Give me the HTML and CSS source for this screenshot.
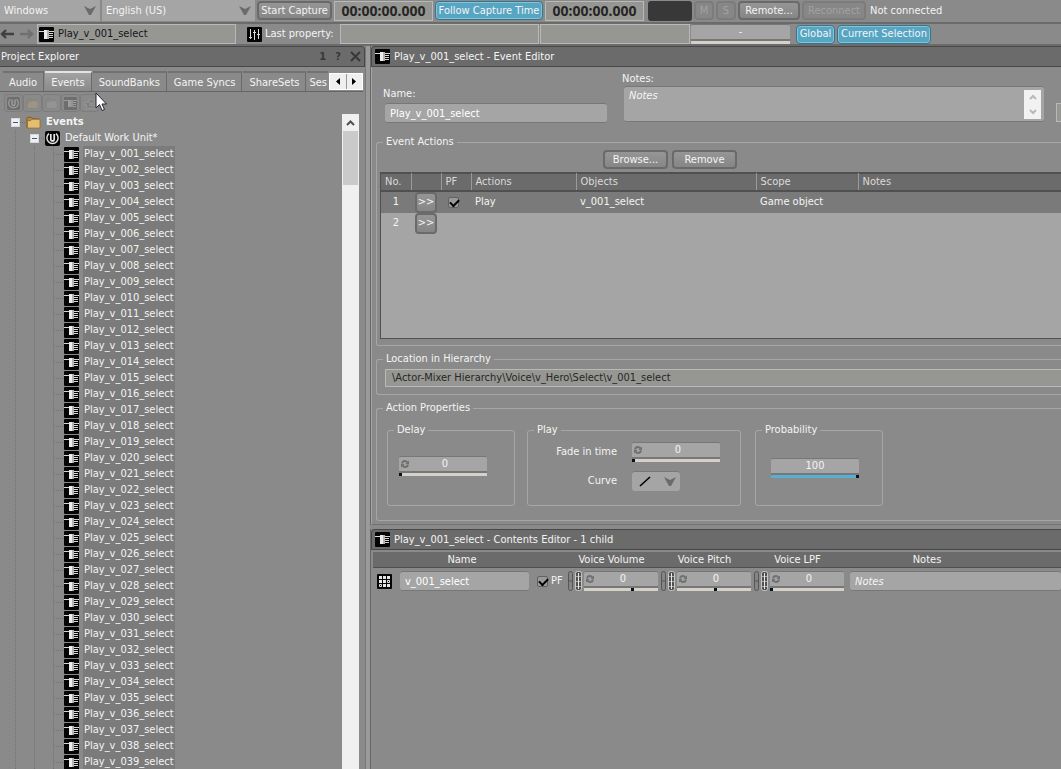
FILE: index.html
```html
<!DOCTYPE html>
<html lang="en">
<head>
    <meta charset="UTF-8">
    <meta name="viewport" content="width=device-width, initial-scale=1.0">
    <title>Event Editor</title>
    <link rel="stylesheet" href="styles.css">
</head>
<body>
    <!-- Shared icons -->
    <svg class="defs" width="0" height="0" aria-hidden="true">
        <symbol id="i-event" viewBox="0 0 15 15">
            <rect width="15" height="15" rx="1" fill="#050505"/>
            <g shape-rendering="crispEdges">
                <path d="M0 4h5v1H0zM10 4h5v1h-5zM10 6h4v1h-4zM10 8h4v1h-4zM10 10h4v1h-4z" fill="#d8d8d8"/>
                <rect x="5" y="3" width="3" height="9" fill="#ececec"/>
                <rect x="8" y="3" width="2" height="9" fill="#b4b4b4"/>
            </g>
        </symbol>
        <symbol id="i-unit" viewBox="0 0 15 15">
            <rect width="15" height="15" rx="2" fill="#050505"/>
            <path d="M4 2.600a5.600 5.600 0 1 0 7 0" fill="none" stroke="#e8e8e8" stroke-width="1.400"/>
            <path d="M5.800 3v5.200a1.700 1.700 0 0 0 3.400 0V3" fill="none" stroke="#e8e8e8" stroke-width="1.700"/>
        </symbol>
        <symbol id="i-folder" viewBox="0 0 16 14">
            <path d="M1 12.500V2.500q0-1 1-1h4l1 1.500h6.500v9.500z" fill="#b98a3e" stroke="#7d5c25"/>
            <path d="M1.500 13V5H5l1-1.500h9V13z" fill="#e3bd74" stroke="#94702f"/>
        </symbol>
        <symbol id="i-down" viewBox="0 0 12 9">
            <path d="M0 0l6 3 6-3-5 9H5z" fill="#6b6b6b"/>
        </symbol>
        <symbol id="i-spin" viewBox="0 0 8 8">
            <path d="M1 3.500Q1.500 1 4 1q1.500 0 2.500 1.500M7 4.500Q6.500 7 4 7 2.500 7 1.500 5.500" fill="none" stroke="#707070" stroke-width="1.800"/>
            <path d="M8 .5v3.500H4.500zM0 7.500V4h3.500z" fill="#707070"/>
        </symbol>
        <symbol id="i-link" viewBox="0 0 5 20">
            <rect x=".5" y=".5" width="4" height="19" rx="2" fill="#858585" stroke="#555"/>
            <path d="M1 10h3" stroke="#555"/>
        </symbol>
        <symbol id="i-rtpc" viewBox="0 0 7 20">
            <rect x=".5" y=".5" width="6" height="19" rx="2" fill="#505050" stroke="#c8c8c8"/>
            <path d="M1 5.500h5M1 10.500h5M1 15.500h5" stroke="#aaa"/>
            <path d="M3.500 2v16" stroke="#e8e8e8"/>
        </symbol>
    </svg>

    <header class="bars">
        <div class="bar bar-top">
            <div class="pick pick-platform">
                <select aria-label="Platform"><option>Windows</option></select>
                <svg class="down"><use href="#i-down"/></svg>
            </div>
            <div class="pick pick-language">
                <select aria-label="Language"><option>English (US)</option></select>
                <svg class="down"><use href="#i-down"/></svg>
            </div>
            <button class="btn w-start">Start Capture</button>
            <output class="clock">00:00:00.000</output>
            <button class="btn btn-on w-follow">Follow Capture Time</button>
            <output class="clock">00:00:00.000</output>
            <span class="meter"></span>
            <button class="btn btn-small" disabled>M</button>
            <button class="btn btn-small" disabled>S</button>
            <button class="btn w-remote">Remote...</button>
            <button class="btn w-reconnect" disabled>Reconnect</button>
            <span class="status">Not connected</span>
        </div>
        <div class="bar bar-nav">
            <button class="nav" aria-label="Back"><svg width="14" height="12" viewBox="0 0 14 12"><path d="M14 6H2M6 2L2 6l4 4" fill="none" stroke="#404040" stroke-width="2.400"/></svg></button>
            <button class="nav nav-off" aria-label="Forward"><svg width="14" height="12" viewBox="0 0 14 12"><path d="M0 6h12M8 2l4 4-4 4" fill="none" stroke="#6f6f6f" stroke-width="2.400"/></svg></button>
            <div class="current"><svg class="icon"><use href="#i-event"/></svg><span>Play_v_001_select</span></div>
            <svg class="icon" viewBox="0 0 15 15"><rect width="15" height="15" rx="1" fill="#050505"/><path d="M3.500 2v10M7.500 3v10M11.500 2v10M2 10.500h3M6 5.500h3M10 7.500h3" stroke="#ddd"/></svg>
            <span class="last">Last property:</span>
            <div class="box box-last"></div>
            <div class="box box-value"></div>
            <div class="knob knob-wide"><span class="knob-value">-</span><span class="track"></span></div>
            <button class="btn btn-on w-global">Global</button>
            <button class="btn btn-on w-selection">Current Selection</button>
        </div>
    </header>

    <div class="main">
        <section class="explorer">
            <div class="title">
                <h2>Project Explorer</h2>
                <span class="title-tools"><b>1</b><b>?</b><svg width="11" height="11" viewBox="0 0 11 11"><path d="M1 1l9 9M10 1l-9 9" stroke="#383838" stroke-width="2"/></svg></span>
            </div>
            <nav class="tabs">
                <button class="tab">Audio</button>
                <button class="tab tab-on">Events</button>
                <button class="tab">SoundBanks</button>
                <button class="tab">Game Syncs</button>
                <button class="tab">ShareSets</button>
                <button class="tab tab-cut">Ses</button>
                <div class="tab-scroll">
                    <button aria-label="Previous tabs"><svg width="4" height="7" viewBox="0 0 4 7"><path d="M4 0v7L0 3.500z"/></svg></button>
                    <button aria-label="Next tabs"><svg width="4" height="7" viewBox="0 0 4 7"><path d="M0 0v7l4-3.500z"/></svg></button>
                </div>
            </nav>
            <div class="tools">
                <button disabled aria-label="New work unit"><svg class="icon"><use href="#i-unit"/></svg></button>
                <button disabled aria-label="New folder"><svg class="icon"><use href="#i-folder"/></svg></button>
                <button disabled aria-label="New virtual folder"><svg class="icon pale"><use href="#i-folder"/></svg></button>
                <button disabled aria-label="New event"><svg class="icon"><use href="#i-event"/></svg></button>
                <button disabled aria-label="New dialogue event"><svg class="icon" viewBox="0 0 15 15"><path d="M2 9V6h5V3h6v4H8v3h6v3H4V9z" fill="#555" stroke="#ccc"/></svg></button>
                <svg class="cursor" width="12" height="20" viewBox="0 0 12 20"><path d="M1 1v15l3.500-3.500L7 18.500l2.500-1L7 12h4.500z" fill="#fff" stroke="#223"/></svg>
            </div>
            <div class="browse">
                <ul class="tree" id="tree">
                    <li class="lvl-1"><span class="fold"></span><i class="dots"></i><svg class="icon"><use href="#i-folder"/></svg><strong>Events</strong></li>
                    <li class="lvl-2"><span class="fold"></span><i class="dots"></i><svg class="icon"><use href="#i-unit"/></svg><span>Default Work Unit*</span></li>
                </ul>
                <div class="scroll">
                    <span class="scroll-up"><svg width="9" height="6" viewBox="0 0 9 6"><path d="M1 5l3.500-3.500L8 5" fill="none" stroke="#505050" stroke-width="2"/></svg></span>
                    <span class="scroll-thumb"></span>
                </div>
            </div>
        </section>

        <div class="editors">
            <section class="editor">
                <div class="title"><svg class="icon"><use href="#i-event"/></svg><h2>Play_v_001_select - Event Editor</h2></div>
                <div class="editor-body">
                    <div class="head">
                        <div class="name-field">
                            <label for="name">Name:</label>
                            <input class="text" id="name" type="text" value="Play_v_001_select">
                        </div>
                        <div class="notes-field">
                            <label for="notes">Notes:</label>
                            <div class="notes-box">
                                <textarea class="text" id="notes" placeholder="Notes"></textarea>
                                <span class="notes-scroll">
                                    <svg width="8" height="6" viewBox="0 0 8 6"><path d="M1 5l3-3 3 3" fill="none" stroke="#b8b8b8" stroke-width="2"/></svg>
                                    <svg width="8" height="6" viewBox="0 0 8 6"><path d="M1 1l3 3 3-3" fill="none" stroke="#b8b8b8" stroke-width="2"/></svg>
                                </span>
                            </div>
                        </div>
                        <div class="edge"></div>
                    </div>

                    <fieldset class="group group-actions">
                        <legend>Event Actions</legend>
                        <div class="commands">
                            <button class="btn">Browse...</button>
                            <button class="btn">Remove</button>
                        </div>
                        <div class="grid">
                            <table>
                                <thead>
                                    <tr><th class="c-no">No.</th><th class="c-go"></th><th class="c-pf">PF</th><th class="c-act">Actions</th><th class="c-obj">Objects</th><th class="c-scope">Scope</th><th>Notes</th></tr>
                                </thead>
                                <tbody>
                                    <tr class="picked"><td class="c-no">1</td><td><button class="btn go">&gt;&gt;</button></td><td class="c-check"><input type="checkbox" aria-label="PF" checked></td><td>Play</td><td>v_001_select</td><td>Game object</td><td></td></tr>
                                    <tr><td class="c-no">2</td><td><button class="btn go">&gt;&gt;</button></td><td></td><td></td><td></td><td></td><td></td></tr>
                                </tbody>
                            </table>
                        </div>
                    </fieldset>

                    <fieldset class="group group-location">
                        <legend>Location in Hierarchy</legend>
                        <div class="box path">\Actor-Mixer Hierarchy\Voice\v_Hero\Select\v_001_select</div>
                    </fieldset>

                    <fieldset class="group group-props">
                        <legend>Action Properties</legend>
                        <div class="props">
                            <fieldset class="group prop prop-delay">
                                <legend>Delay</legend>
                                <div class="knob"><svg class="spin"><use href="#i-spin"/></svg><input class="knob-value" aria-label="Delay" value="0"><span class="track"><i></i></span></div>
                            </fieldset>
                            <fieldset class="group prop prop-play">
                                <legend>Play</legend>
                                <div class="pair">
                                    <label for="fade">Fade in time</label>
                                    <div class="knob"><svg class="spin"><use href="#i-spin"/></svg><input class="knob-value" id="fade" value="0"><span class="track"><i></i></span></div>
                                    <label for="curve">Curve</label>
                                    <div class="pick pick-curve">
                                        <select id="curve"><option label=" "></option></select>
                                        <svg class="line" width="12" height="11" viewBox="0 0 12 11"><path d="M1 10L11 1" stroke="#000" stroke-width="1.600"/></svg>
                                        <svg class="down"><use href="#i-down"/></svg>
                                    </div>
                                </div>
                            </fieldset>
                            <fieldset class="group prop prop-chance">
                                <legend>Probability</legend>
                                <div class="knob knob-full"><input class="knob-value" aria-label="Probability" value="100"><span class="track"><i></i></span></div>
                            </fieldset>
                        </div>
                    </fieldset>
                </div>
            </section>

            <section class="editor contents">
                <div class="title"><svg class="icon"><use href="#i-event"/></svg><h2>Play_v_001_select - Contents Editor - 1 child</h2></div>
                <div class="cols cols-head">
                    <span class="h-name">Name</span><span>Voice Volume</span><span>Voice Pitch</span><span>Voice LPF</span><span class="h-notes">Notes</span>
                </div>
                <div class="cols cols-row">
                    <div class="child">
                        <svg class="icon" viewBox="0 0 15 15"><rect width="15" height="15" rx="1" fill="#050505"/><path d="M2 2h3v3H2zM6 2h3v3H6zM10 2h3v3h-3zM2 6h3v3H2zM6 6h3v3H6zM10 10h3v3h-3zM6 10h3v3H6z" fill="#e8e8e8"/><path d="M10.500 6.500h2v2h-2zM2.500 10.500h2v2h-2z" fill="none" stroke="#e8e8e8"/></svg>
                        <input class="text" type="text" aria-label="Name" value="v_001_select">
                    </div>
                    <label class="pf"><input type="checkbox" checked>PF</label>
                    <div class="voice"><svg class="lnk"><use href="#i-link"/></svg><svg class="rtpc"><use href="#i-rtpc"/></svg><div class="knob knob-mid"><svg class="spin"><use href="#i-spin"/></svg><input class="knob-value" aria-label="Voice Volume" value="0"><span class="track"><i style="margin-left: 64%"></i></span></div></div>
                    <div class="voice"><svg class="lnk"><use href="#i-link"/></svg><svg class="rtpc"><use href="#i-rtpc"/></svg><div class="knob knob-mid"><svg class="spin"><use href="#i-spin"/></svg><input class="knob-value" aria-label="Voice Pitch" value="0"><span class="track"><i style="margin-left: 50%"></i></span></div></div>
                    <div class="voice"><svg class="lnk"><use href="#i-link"/></svg><svg class="rtpc"><use href="#i-rtpc"/></svg><div class="knob knob-mid"><svg class="spin"><use href="#i-spin"/></svg><input class="knob-value" aria-label="Voice LPF" value="0"><span class="track"><i></i></span></div></div>
                    <input class="text row-notes" type="text" aria-label="Notes" placeholder="Notes">
                </div>
            </section>
        </div>
    </div>

    <script>
        const tree = document.getElementById('tree');

        for (let i = 1; i <= 39; i++) {
            const li = document.createElement('li');
            li.className = 'lvl-3';
            li.innerHTML = '<i class="dots"></i><svg class="icon"><use href="#i-event"/></svg>' +
                '<span class="sel">Play_v_' + String(i).padStart(3, '0') + '_select</span>';
            tree.appendChild(li);
        }
    </script>
</body>
</html>
```
FILE: styles.css
```css
:root {
    --bg: #8a8a8a;
    --title: #6b6b6b;
    --field: #a5a5a5;
    --box: #969693;
    --box-line: #b9b9b9;
    --line: #a6a6a6;
    --dark: #6a6a6a;
    --text: #f4f4f4;
    --blue: #56a5c3;
}

* {
    margin: 0;
    padding: 0;
    box-sizing: border-box;
}

body {
    display: flex;
    flex-direction: column;
    height: 100vh;
    overflow: hidden;
    background: var(--bg);
    color: var(--text);
    font-family: "DejaVu Sans Condensed", "Noto Sans", sans-serif;
    font-size: 11px;
    line-height: 14px;
}

button, input, select, textarea {
    font: inherit;
    color: inherit;
    border: none;
    background: none;
}

h2 {
    font-size: 11px;
    font-weight: normal;
}

svg {
    flex: none;
}

.defs {
    position: absolute;
}

.icon {
    width: 15px;
    height: 15px;
}

/* Toolbars */
.bar {
    display: flex;
    align-items: center;
    white-space: nowrap;
    border-bottom: 2px solid var(--title);
}

.bar-top {
    height: 24px;
    gap: 2px;
    padding-bottom: 1px;
}

.bar-nav {
    height: 22px;
}

.btn {
    flex: none;
    height: 19px;
    border: 2px solid var(--dark);
    border-radius: 4px;
    background: linear-gradient(#969696, #868686);
}

.btn:disabled {
    color: #a2a2a2;
    border-color: #7c7c7c;
    background: #878787;
}

.btn-on {
    border: 1px solid #37758d;
    background: var(--blue);
    box-shadow: inset 0 0 0 1px #86c2d8;
}

.btn-small { width: 20px; }
.w-start { width: 75px; }
.w-follow { width: 108px; }
.w-remote { width: 62px; }
.w-reconnect { width: 64px; }
.w-global { width: 39px; margin: 0 2px 0 6px; }
.w-selection { width: 94px; }

.pick {
    display: grid;
    flex: none;
    align-items: center;
    background: var(--field);
}

.pick > * {
    grid-area: 1 / 1;
}

.pick select {
    appearance: none;
    width: 100%;
    height: 100%;
    padding-left: 4px;
}

.pick .down {
    justify-self: end;
    margin-right: 4px;
    pointer-events: none;
}

.pick .line {
    margin-left: 7px;
}

.pick-platform { width: 100px; height: 21px; }
.pick-language { width: 153px; height: 21px; }

.down {
    width: 12px;
    height: 9px;
}

.clock {
    width: 99px;
    height: 20px;
    border: 1px solid var(--box-line);
    background: var(--box);
    color: #262626;
    font-family: "Noto Sans", sans-serif;
    font-size: 14px;
    font-weight: bold;
    line-height: 18px;
    text-align: center;
}

.meter {
    width: 44px;
    height: 20px;
    margin-left: 2px;
    border-radius: 3px;
    background: #383838;
}

.status {
    margin-left: 2px;
}

.nav {
    width: 20px;
    height: 14px;
    text-align: left;
}

.nav svg {
    display: block;
}

.nav-off {
    width: 17px;
}

.current {
    display: flex;
    align-items: center;
    gap: 4px;
    width: 199px;
    height: 20px;
    margin-right: 11px;
    padding-left: 1px;
    border: 1px solid var(--box-line);
    background: var(--box);
    color: #161616;
}

.last {
    width: 75px;
    margin-left: 3px;
}

.box {
    border: 1px solid var(--box-line);
    background: var(--box);
}

.bar .box {
    height: 20px;
    margin-right: 1px;
}

.box-last { width: 199px; }
.box-value { width: 150px; }

/* Number field with its slider track below */
.knob {
    display: grid;
    width: 88px;
    align-items: center;
    border-radius: 2px;
    border-top: 1px solid #777;
    background: var(--field);
}

.knob-value {
    grid-area: 1 / 1;
    width: 100%;
    height: 14px;
    padding-left: 4px;
    text-align: center;
}

.knob .spin {
    grid-area: 1 / 1;
    width: 8px;
    height: 8px;
    margin-left: 2px;
}

.track {
    display: block;
    box-sizing: content-box;
    height: 3px;
    border-top: 2px solid #777;
    background: #d5d1c8;
}

.track i {
    display: block;
    width: 3px;
    height: 3px;
    background: #06121c;
}

.knob-wide { width: 99px; }
.knob-mid { width: 74px; }

.knob-wide .knob-value,
.knob-full .knob-value {
    padding-left: 0;
}

.knob-full .track {
    background: #55b0d2;
}

.knob-full .track i {
    margin-left: auto;
}

/* Panels */
.main {
    display: flex;
    flex: 1;
    min-height: 0;
}

.title {
    display: flex;
    align-items: center;
    height: 21px;
    gap: 4px;
    padding-left: 1px;
    border: 1px solid #484848;
    border-width: 1px 0;
    background: var(--title);
}

.explorer {
    display: flex;
    flex-direction: column;
    width: 366px;
    flex: none;
    border-right: 1px solid #777;
}

.explorer .title {
    justify-content: space-between;
    border-right: 1px solid #484848;
    border-radius: 0 4px 0 0;
}

.title-tools {
    display: flex;
    align-items: center;
    gap: 9px;
    padding-right: 3px;
    color: #383838;
}

.tabs {
    display: flex;
    align-items: flex-end;
    height: 25px;
    margin-right: 2px;
    padding-left: 3px;
    gap: 1px;
    border-bottom: 1px solid #666;
}

.tab {
    flex: none;
    height: 20px;
    padding: 2px 6px 0;
    border-top: 2px solid #727272;
    border-right: 1px solid #6a6a6a;
}

.tab-on {
    border-top-color: #e2e2e2;
    background: linear-gradient(#a2a2a2, #8a8a8a);
}

.tab-cut {
    flex: 1;
    min-width: 0;
    padding: 2px 0 0 2px;
    text-align: left;
    border-right: none;
}

.tab-scroll {
    display: flex;
    flex: none;
    width: 34px;
    height: 17px;
    margin-bottom: 1px;
    gap: 1px;
    border: 1px solid #fff;
    background: #999;
}

.tab-scroll button {
    display: flex;
    flex: 1;
    align-items: center;
    justify-content: center;
    background: #efefef;
}

.tools {
    position: relative;
    display: flex;
    height: 22px;
    padding: 2px 0 0 4px;
}

.tools button {
    display: flex;
    align-items: center;
    justify-content: center;
    width: 19px;
    height: 18px;
    border: 1px solid #7d7d7d;
    border-radius: 3px;
}

.tools button .icon {
    width: 13px;
    height: 13px;
    opacity: 0.2;
}

.tools .pale {
    filter: grayscale(1);
}

.cursor {
    position: absolute;
    left: 95px;
    top: 0;
}

.browse {
    display: flex;
    flex: 1;
    min-height: 0;
    justify-content: space-between;
    padding-right: 6px;
}

.tree {
    list-style: none;
    overflow: hidden;
    flex: 1;
}

.tree li {
    display: flex;
    align-items: center;
    height: 16px;
    white-space: nowrap;
    background: repeating-linear-gradient(#727272 0 1px, transparent 1px 2px) 15px 0 / 1px 100% no-repeat;
}

.tree .icon {
    margin-right: 5px;
}

.tree .lvl-1 {
    padding-left: 11px;
    background: none;
}

.tree .lvl-2 {
    padding-left: 30px;
}

.tree .lvl-3 {
    padding-left: 54px;
    background:
        repeating-linear-gradient(#727272 0 1px, transparent 1px 2px) 15px 0 / 1px 100% no-repeat,
        repeating-linear-gradient(#727272 0 1px, transparent 1px 2px) 34px 0 / 1px 100% no-repeat,
        repeating-linear-gradient(#727272 0 1px, transparent 1px 2px) 53px 0 / 1px 100% no-repeat;
}

.fold {
    width: 9px;
    height: 9px;
    border: 1px solid #d8d8d8;
    background: linear-gradient(#3a55a0, #3a55a0) center / 5px 1px no-repeat #f0f0f0;
}

.dots {
    width: 6px;
    height: 1px;
    background: repeating-linear-gradient(90deg, #727272 0 1px, transparent 1px 2px);
}

.lvl-3 .dots {
    width: 10px;
}

.tree .lvl-3 .icon {
    margin-right: 4px;
}

.sel {
    padding: 1px 1px;
    background: #7b7b7b;
}

.scroll {
    display: flex;
    flex-direction: column;
    width: 17px;
    background: #f0f0f0;
}

.scroll-up {
    display: flex;
    align-items: center;
    justify-content: center;
    height: 17px;
}

.scroll-thumb {
    height: 54px;
    margin: 0 1px;
    background: #cacaca;
}

/* Editors */
.editors {
    display: flex;
    flex: 1;
    flex-direction: column;
    min-width: 0;
    padding-left: 4px;
    background: linear-gradient(#9a9a9a, #9a9a9a) left / 4px 100% no-repeat;
}

.editor {
    border-left: 1px solid #666;
}

.editor .title {
    padding-left: 3px;
    border-left: 1px solid #484848;
    border-radius: 4px 0 0 0;
}

.editor-body {
    padding: 5px 0 3px 4px;
    border-left: 1px solid var(--line);
    border-bottom: 1px solid #727272;
}

.head {
    display: flex;
    height: 63px;
}

.name-field {
    width: 224px;
    padding: 15px 0 0 7px;
    margin-right: 22px;
}

.name-field label,
.notes-field label {
    display: block;
}

.text {
    border-top: 1px solid #777;
    border-bottom: 1px solid #777;
    border-radius: 3px;
    background: var(--field);
    height: 20px;
    padding: 0 5px;
    color: #fff;
}

.text::placeholder {
    color: #f4f4f4;
    font-style: italic;
    opacity: 1;
}

.name-field .text {
    width: 222px;
    margin: 2px 0 0 2px;
}

.notes-field {
    flex: 1;
}

.notes-box {
    display: grid;
    margin-left: 2px;
}

.notes-box textarea {
    grid-area: 1 / 1;
    display: block;
    width: 100%;
    height: 36px;
    padding-top: 2px;
    resize: none;
}

.notes-scroll {
    grid-area: 1 / 1;
    display: flex;
    flex-direction: column;
    align-items: center;
    justify-content: space-between;
    align-self: center;
    justify-self: end;
    width: 17px;
    height: 29px;
    margin-right: 3px;
    padding: 4px 0;
    background: #f2f2f2;
}

.edge {
    width: 5px;
    height: 19px;
    margin: 31px 0 0 12px;
    border: 1px solid var(--box-line);
    border-right: none;
    background: var(--box);
}

.group {
    min-width: 0;
    border: 1px solid var(--line);
    border-radius: 3px;
}

.group > legend {
    margin-left: 6px;
    padding: 0 3px;
}

.editor-body > .group {
    border-right: none;
    border-radius: 3px 0 0 3px;
}

.group-actions {
    padding: 1px 0 6px;
}

.commands {
    display: flex;
    gap: 4px;
    padding-left: 226px;
    margin-bottom: 3px;
}

.commands .btn {
    width: 65px;
}

.grid {
    height: 167px;
    margin-left: 3px;
    border: 1px solid #505050;
    border-right: none;
    background: var(--field);
}

table {
    width: 100%;
    table-layout: fixed;
    border-collapse: collapse;
}

thead tr {
    height: 17px;
    border-top: 1px solid #505050;
    border-bottom: 2px solid #505050;
    background: var(--title);
    color: #dadada;
}

th {
    padding-left: 4px;
    border-left: 1px solid #9a9a9a;
    font-weight: normal;
    text-align: left;
}

th:first-child {
    border-left: none;
}

td {
    height: 21px;
    padding-left: 4px;
}

td.c-no {
    padding-left: 0;
    text-align: center;
}

td.c-check {
    padding-left: 7px;
}

.picked {
    background: #7a7a7a;
}

.c-no { width: 30px; }
.c-go { width: 30px; }
.c-pf { width: 30px; }
.c-act { width: 105px; }
.c-obj { width: 180px; }
.c-scope { width: 102px; }

.go {
    display: block;
    width: 22px;
    height: 21px;
}

input[type="checkbox"] {
    display: block;
    appearance: none;
    width: 11px;
    height: 11px;
    border: 1px solid #626262;
    border-radius: 2px;
    background: #999;
}

input[type="checkbox"]:checked::before {
    content: "";
    display: block;
    width: 7px;
    height: 4px;
    margin: 1px;
    border: solid #000;
    border-width: 0 0 2px 2px;
    transform: rotate(-45deg);
}

.group-location {
    margin-top: 6px;
    padding: 3px 0 7px;
}

.path {
    height: 18px;
    margin-left: 8px;
    padding-left: 6px;
    border-right: none;
    color: #262626;
    line-height: 16px;
}

.group-props {
    margin-top: 6px;
    padding: 8px 0 14px;
}

.props {
    display: flex;
    gap: 12px;
    padding-left: 10px;
}

.prop {
    height: 83px;
}

.prop-delay {
    width: 128px;
    padding-top: 19px;
}

.prop-play {
    width: 214px;
    padding-top: 5px;
}

.prop-chance {
    width: 128px;
    margin-left: 2px;
    padding-top: 21px;
}

.prop-delay .knob {
    margin-left: 11px;
}

.prop-chance .knob {
    margin-left: 15px;
}

.pair {
    display: grid;
    grid-template-columns: 71px 88px;
    gap: 9px 15px;
    align-items: center;
    margin-left: 18px;
    text-align: right;
}

.pick-curve {
    width: 48px;
    height: 20px;
    border-top: 1px solid #777;
    border-radius: 3px;
}

/* Contents editor */
.contents {
    flex: 1;
    margin-top: 4px;
}

.cols {
    display: grid;
    grid-template-columns: 156px 36px 93px 93px 93px minmax(0, 1fr);
    margin-left: 2px;
    align-items: center;
}

.cols-head {
    height: 16px;
    margin-top: 2px;
    border-bottom: 1px solid #505050;
    background: var(--title);
    text-align: center;
}

.h-name {
    grid-column: 1 / 3;
    padding-right: 14px;
}

.h-notes {
    max-width: 166px;
}

.cols-row {
    height: 26px;
}

.child {
    display: flex;
    align-items: center;
    gap: 8px;
    padding-left: 4px;
}

.child .text {
    width: 129px;
}

.pf {
    display: flex;
    align-items: center;
    gap: 3px;
    padding-left: 8px;
}

.voice {
    display: flex;
    align-items: center;
    padding-left: 3px;
    gap: 2px;
}

.lnk {
    width: 5px;
    height: 20px;
}

.rtpc {
    width: 7px;
    height: 20px;
}

.row-notes {
    margin-left: 6px;
}
```
